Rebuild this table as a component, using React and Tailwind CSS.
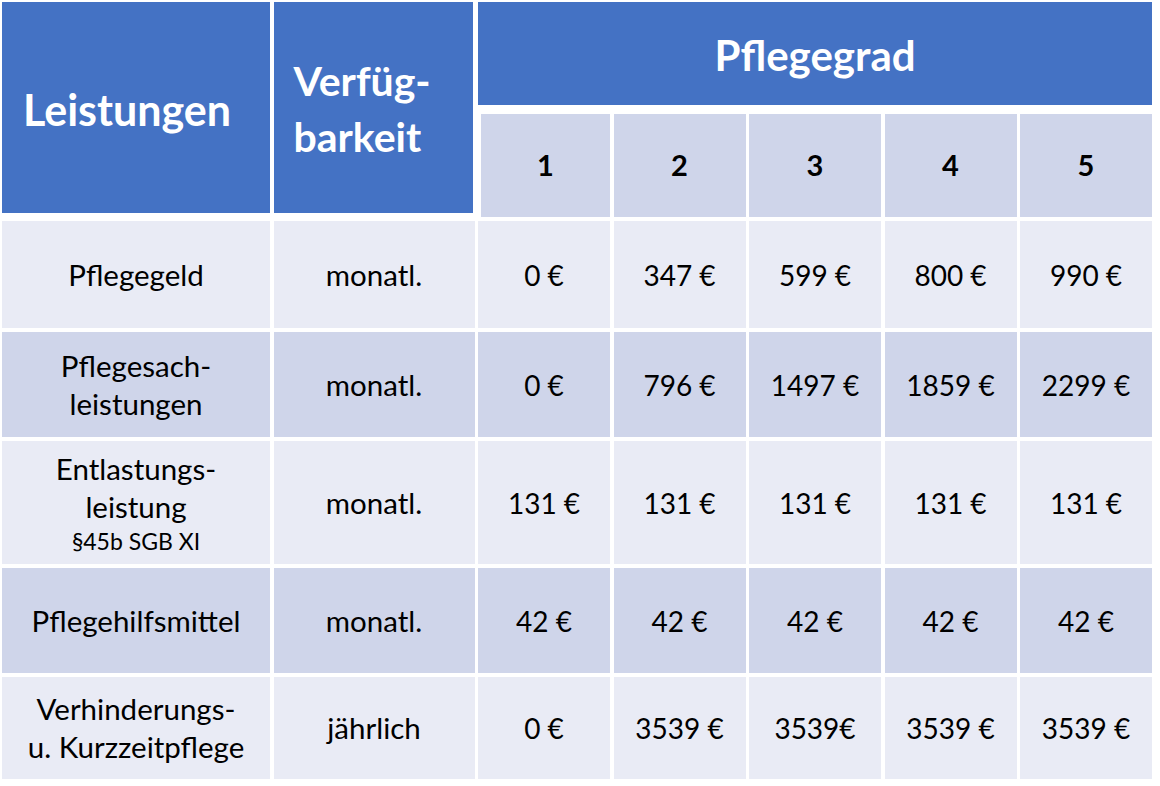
const rows = [
  {
    label: ['Pflegegeld'],
    period: 'monatl.',
    values: ['0 €', '347 €', '599 €', '800 €', '990 €'],
    bg: 'bg-[#e9ebf5]',
  },
  {
    label: ['Pflegesach-', 'leistungen'],
    period: 'monatl.',
    values: ['0 €', '796 €', '1497 €', '1859 €', '2299 €'],
    bg: 'bg-[#cfd5ea]',
  },
  {
    label: ['Entlastungs-', 'leistung'],
    note: '§45b SGB XI',
    period: 'monatl.',
    values: ['131 €', '131 €', '131 €', '131 €', '131 €'],
    bg: 'bg-[#e9ebf5]',
  },
  {
    label: ['Pflegehilfsmittel'],
    period: 'monatl.',
    values: ['42 €', '42 €', '42 €', '42 €', '42 €'],
    bg: 'bg-[#cfd5ea]',
  },
  {
    label: ['Verhinderungs-', 'u. Kurzzeitpflege'],
    period: 'jährlich',
    values: ['0 €', '3539 €', '3539€', '3539 €', '3539 €'],
    bg: 'bg-[#e9ebf5]',
  },
]

const Cell = ({ bg, children }) => (
  <div className={`${bg} flex flex-col items-center justify-center text-center`}>{children}</div>
)

export default function App() {
  return (
    <div className="w-[1160px] h-[786px] bg-white pt-[2px] pl-[2px] text-black font-['Lato',sans-serif]">
      <div className="w-[1150px] grid grid-cols-[268px_201px_repeat(5,minmax(0,1fr))] grid-rows-[103px_108px_107px_105px_123px_105px_102px] gap-x-[3.5px] gap-y-[4px]">
        <div className="row-span-2 self-start h-[211px] bg-[#4472c4] flex items-center pl-[21px] pt-[4px]">
          <span className="text-white font-bold text-[43px] leading-none">Leistungen</span>
        </div>
        <div className="row-span-2 self-start h-[211px] mr-[2px] bg-[#4472c4] flex flex-col justify-center pl-[20px] pt-[2px]">
          <span className="text-white font-bold text-[41px] leading-[56px]">Verfüg-</span>
          <span className="text-white font-bold text-[41px] leading-[56px]">barkeit</span>
        </div>
        <div className="col-span-5 bg-[#4472c4] flex items-center justify-center pt-[2px]">
          <span className="text-white font-bold text-[42px] leading-none">Pflegegrad</span>
        </div>
        {[1, 2, 3, 4, 5].map((n) => (
          <div
            key={n}
            className={`mt-[5px] bg-[#cfd5ea] flex items-center justify-center pb-[3px] ${n === 1 ? 'ml-[3px]' : ''}`}
          >
            <span className="font-bold text-[29px] leading-none">{n}</span>
          </div>
        ))}

        {rows.map((r) => (
          <>
            <Cell key={r.label[0]} bg={r.bg}>
              {r.label.map((l) => (
                <span key={l} className="text-[29.5px] leading-[38px]">{l}</span>
              ))}
              {r.note && <span className="text-[23px] leading-[30px]">{r.note}</span>}
            </Cell>
            <Cell bg={r.bg}>
              <span className="text-[29.5px] leading-none">{r.period}</span>
            </Cell>
            {r.values.map((v, i) => (
              <Cell key={i} bg={r.bg}>
                <span className="text-[28px] leading-none">{v}</span>
              </Cell>
            ))}
          </>
        ))}
      </div>
    </div>
  )
}
